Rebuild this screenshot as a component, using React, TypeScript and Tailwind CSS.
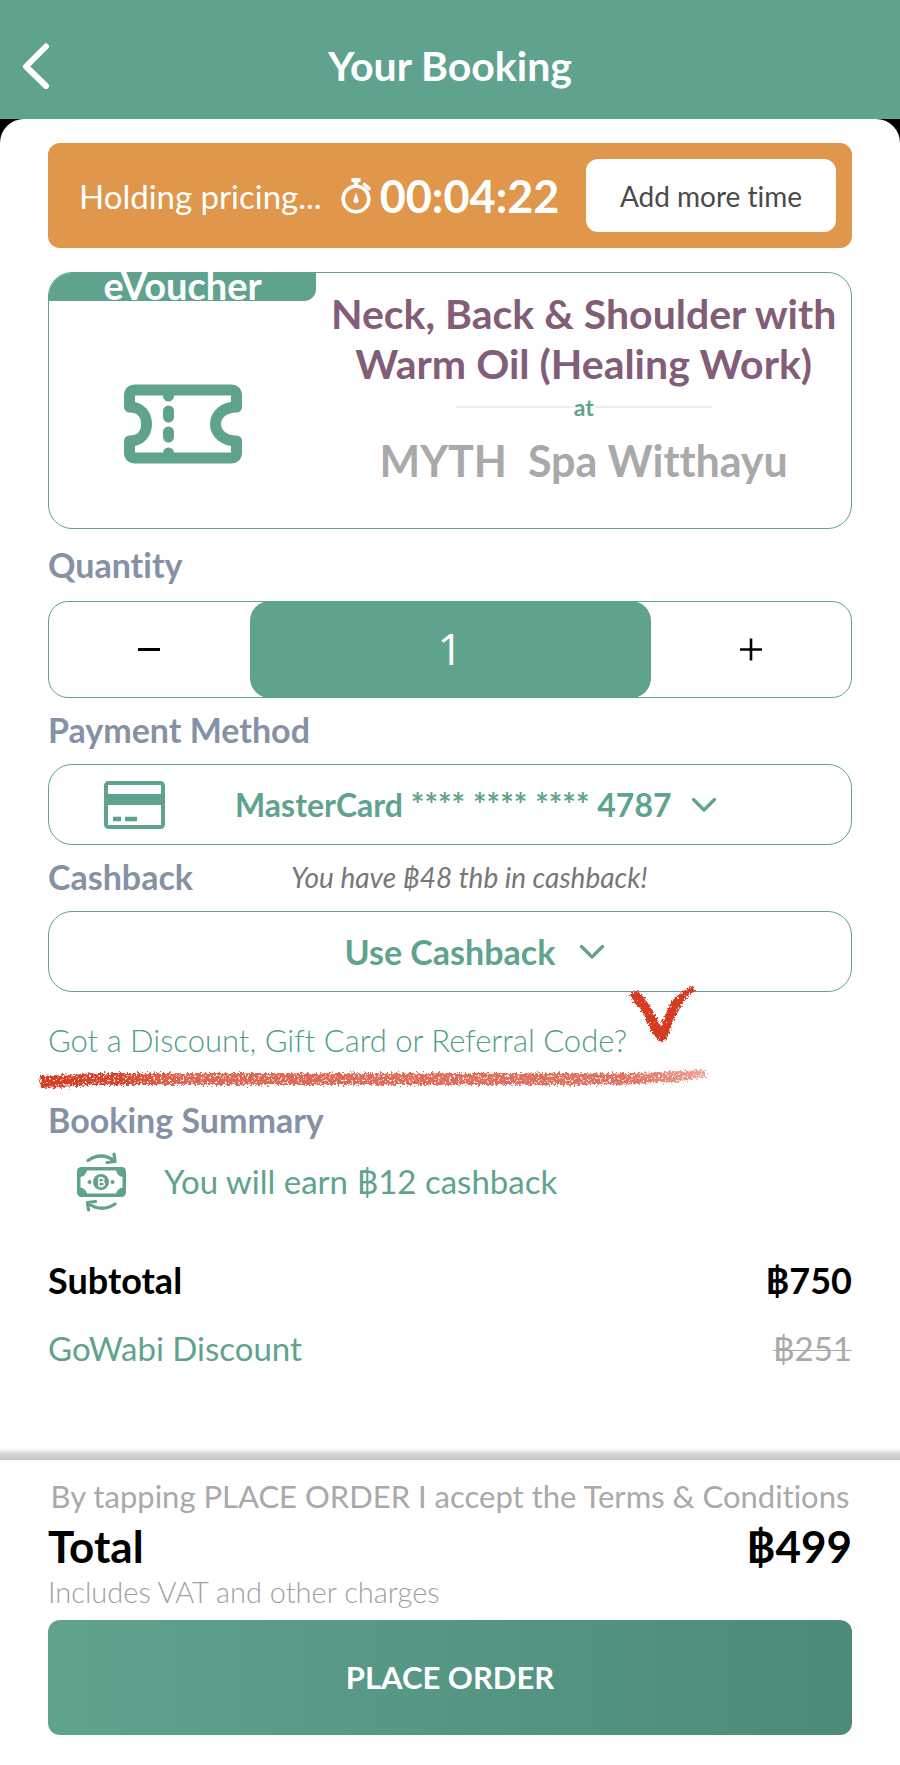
import { useState } from "react";
import type { ReactNode } from "react";

function SectionTitle({ children }: { children: ReactNode }) {
  return <h2 className="text-[34px] leading-10 font-bold text-[#8592a6]">{children}</h2>;
}

function ChevronDown() {
  return (
    <svg className="h-4 w-6 shrink-0" viewBox="0 0 24 16" fill="none" aria-hidden="true">
      <path d="M1.5 2.5 12 13 22.500 2.500" stroke="#5fa38f" strokeWidth="3.200" strokeLinecap="round" strokeLinejoin="round" />
    </svg>
  );
}

function BackIcon() {
  return (
    <svg className="h-[46px] w-7" viewBox="0 0 28 46" fill="none" aria-hidden="true">
      <path d="M24 3.500 4 23.500l20 19.500" stroke="#fff" strokeWidth="6" strokeLinecap="round" strokeLinejoin="round" />
    </svg>
  );
}

function StopwatchIcon() {
  return (
    <svg className="h-9 w-8 shrink-0" viewBox="0 0 32 36" fill="none" aria-hidden="true">
      <circle cx="16" cy="21" r="12.800" stroke="#fff" strokeWidth="3.600" />
      <path d="M11.500 0h9v4h-2.300v4h-4.400V4h-2.300z" fill="#fff" />
      <path d="m24.500 6.500 4.500 4" stroke="#fff" strokeWidth="3.600" strokeLinecap="round" />
      <path d="M16 14.500 18.500 22a2.600 2.600 0 1 1-5 0z" fill="#fff" />
    </svg>
  );
}

function TicketIcon() {
  return (
    <svg className="h-20 w-[118px]" viewBox="0 0 118 80" fill="none" aria-hidden="true">
      <path
        d="M11 6h96q5.500 0 5.500 5.500V23c-12 0-21 7-21 17s9 17 21 17v11.500q0 5.500-5.500 5.500H11q-5.500 0-5.500-5.500V57C17 57 22.500 49 22.500 40S17 23 5.500 23V11.500Q5.500 6 11 6z"
        stroke="#5fa38f"
        strokeWidth="11"
        strokeLinejoin="round"
      />
      <path d="M44.500 8v4M44.500 27v6M44.500 48v5M44.500 69v4" stroke="#5fa38f" strokeWidth="11" strokeLinecap="round" />
    </svg>
  );
}

function CardIcon() {
  return (
    <svg className="h-12 w-[61px]" viewBox="0 0 61 48" fill="none" aria-hidden="true">
      <rect x="2" y="2" width="57" height="44" rx="2.500" stroke="#5fa38f" strokeWidth="4" />
      <path d="M2 13h57v11H2z" fill="#5fa38f" />
      <path d="M9 38h8M21 38h12" stroke="#5fa38f" strokeWidth="4.500" />
    </svg>
  );
}

function CashbackIcon() {
  return (
    <svg className="h-[60px] w-[50px]" viewBox="0 0 50 60" fill="none" aria-hidden="true">
      <g stroke="#5fa38f" strokeWidth="3.200" strokeLinecap="round" strokeLinejoin="round">
        <path d="M12 8.500q13-9 26 0M38 2l1 7.500-8 1" />
        <path d="M39 52q-13 8.500-26 0M12.500 58 11.500 50.500l8-1" />
      </g>
      <rect x="1" y="15" width="49" height="30" rx="4.500" fill="#5fa38f" />
      <path d="M11 18.500h29q1.500 5.500 6.500 6.500v10.500q-5 1-6.500 6H11q-1.500-5-6.500-6V25q5-1 6.500-6.500z" fill="#fff" />
      <circle cx="25" cy="30" r="8" fill="#5fa38f" />
      <circle cx="13.500" cy="30" r="2" fill="#5fa38f" />
      <circle cx="36.500" cy="30" r="2" fill="#5fa38f" />
      <path
        d="M22.800 26.300h3q2.200.2 2.200 1.800t-2.200 1.900q2.700.2 2.700 2t-2.700 1.900h-3zM22.800 30h3M24 24.800v1.500M26 24.800v1.500M24 34v1.500M26 34v1.500"
        stroke="#fff"
        strokeWidth="1.400"
      />
    </svg>
  );
}

function CrayonFilter({ id, grain }: { id: string; grain: string }) {
  return (
    <filter id={id} x="-10%" y="-30%" width="120%" height="160%">
      <feTurbulence type="fractalNoise" baseFrequency="0.45" numOctaves={3} seed={7} result="noise" />
      <feDisplacementMap in="SourceGraphic" in2="noise" scale={7} xChannelSelector="R" yChannelSelector="G" result="rough" />
      <feColorMatrix in="noise" type="matrix" values={grain} result="grain" />
      <feComposite in="rough" in2="grain" operator="in" />
    </filter>
  );
}

function CrayonUnderline() {
  return (
    <svg className="pointer-events-none absolute top-[42px] -left-3 h-8 w-[674px]" viewBox="0 0 674 32" fill="none" aria-hidden="true">
      <defs>
        <CrayonFilter id="crayon-line" grain="0 0 0 0 0  0 0 0 0 0  0 0 0 0 0  0 0 6 0 -1.6" />
        <linearGradient id="crayon-fade" gradientUnits="userSpaceOnUse" x1="0" y1="0" x2="674" y2="0">
          <stop offset="0" stopColor="#d43a20" />
          <stop offset="0.120" stopColor="#d43a20" stopOpacity="0.950" />
          <stop offset="0.220" stopColor="#d43a20" stopOpacity="0.780" />
          <stop offset="0.880" stopColor="#d43a20" stopOpacity="0.720" />
          <stop offset="1" stopColor="#d43a20" stopOpacity="0.450" />
        </linearGradient>
      </defs>
      <path d="M4 14 60 11h540l70-3v7l-30 5-60 3H120L60 23 6 26q-4-6-2-12z" fill="url(#crayon-fade)" filter="url(#crayon-line)" />
    </svg>
  );
}

function CrayonTick() {
  return (
    <svg className="pointer-events-none absolute -top-9 left-[576px] h-16 w-[76px]" viewBox="0 0 76 64" fill="none" aria-hidden="true">
      <defs>
        <CrayonFilter id="crayon-tick" grain="0 0 0 0 0  0 0 0 0 0  0 0 0 0 0  0 0 12 0 -2.2" />
      </defs>
      <g filter="url(#crayon-tick)" fill="#d43a20">
        <path d="M6 10q5-6 11 0 9 10 20 33 5-18 13-28 8-8 19-13l3 4q-13 9-17 19-7 12-11 28-5 8-12 2Q25 42 16 24q-9-7-10-14z" />
      </g>
    </svg>
  );
}

export default function App() {
  const [quantity, setQuantity] = useState(1);

  return (
    <div className="min-h-screen bg-white font-['Lato','Noto_Sans',sans-serif] text-black [font-variant-ligatures:none]">
      <header className="grid h-[119px] grid-cols-[1fr_auto_1fr] items-center bg-[#5fa38f] px-[22px] pt-3">
        <button type="button" aria-label="Back" className="justify-self-start">
          <BackIcon />
        </button>
        <h1 className="text-[41px] leading-12 font-bold text-white">Your Booking</h1>
      </header>

      <div className="bg-black">
        <main className="rounded-t-3xl bg-white px-12 pt-6">
          <section className="flex h-[105px] items-center rounded-xl bg-[#e0974b] pr-4 pl-[31px] text-white">
            <p className="text-[33px] leading-10">Holding pricing...</p>
            <div className="ml-[18px] flex items-center gap-2">
              <StopwatchIcon />
              <span className="text-[45px] leading-12 font-bold">00:04:22</span>
            </div>
            <button type="button" className="ml-auto h-[73px] w-[250px] rounded-xl bg-white text-[28px] text-[#4a4a4a]">
              Add more time
            </button>
          </section>

          <section className="mt-6 flex h-[257px] rounded-3xl border border-[#5fa38f]">
            <div className="flex w-1/3 flex-col">
              <div className="flex h-7 items-start justify-center rounded-tl-[23px] rounded-br-xl bg-[#5fa38f] text-[38px] leading-6 font-bold text-white">
                eVoucher
              </div>
              <div className="flex flex-1 items-center justify-center pt-[18px]">
                <TicketIcon />
              </div>
            </div>
            <div className="flex flex-1 flex-col items-center pt-4 text-center">
              <h2 className="text-[41px] leading-[50px] font-bold whitespace-nowrap text-[#825d78]">
                Neck, Back &amp; Shoulder with
                <br />
                Warm Oil (Healing Work)
              </h2>
              <div className="mt-0.5 flex w-64 items-center text-[23px] leading-8 font-bold text-[#5fa38f]">
                <span className="h-0.5 flex-1 bg-[#eeeeee]" />
                at
                <span className="h-0.5 flex-1 bg-[#eeeeee]" />
              </div>
              <p className="mt-3 text-[43px] leading-[52px] font-bold whitespace-pre text-[#a9a9a9]">MYTH  Spa Witthayu</p>
            </div>
          </section>

          <section className="pt-4">
            <SectionTitle>Quantity</SectionTitle>
            <div className="mt-4 grid h-[97px] grid-cols-[1fr_2fr_1fr] rounded-[20px] border border-[#5fa38f]">
              <button type="button" aria-label="Decrease quantity" className="flex items-center justify-center" onClick={() => setQuantity(Math.max(1, quantity - 1))}>
                <svg className="size-6" viewBox="0 0 24 24" aria-hidden="true">
                  <path d="M1 11.500h22" stroke="#000" strokeWidth="3" />
                </svg>
              </button>
              <output className="-my-px flex items-center justify-center rounded-[20px] bg-[#5fa38f] pb-1 font-['Open_Sans','Noto_Sans',sans-serif] text-[44px] leading-[60px] text-white">{quantity}</output>
              <button type="button" aria-label="Increase quantity" className="flex items-center justify-center" onClick={() => setQuantity(quantity + 1)}>
                <svg className="size-6" viewBox="0 0 24 24" aria-hidden="true">
                  <path d="M1 11.500h22M12 .5v22" stroke="#000" strokeWidth="2.600" />
                </svg>
              </button>
            </div>
          </section>

          <section className="pt-3">
            <label htmlFor="payment">
              <SectionTitle>Payment Method</SectionTitle>
            </label>
            <div className="mt-[14px] flex h-[81px] items-center rounded-3xl border border-[#5fa38f] pl-[55px]">
              <CardIcon />
              <select id="payment" className="ml-[70px] appearance-none bg-transparent text-[32px] leading-10 font-bold text-[#5fa38f]">
                <option>MasterCard **** **** **** 4787</option>
              </select>
              <span className="ml-5">
                <ChevronDown />
              </span>
            </div>
          </section>

          <section className="pt-3">
            <div className="flex items-center">
              <label htmlFor="cashback">
                <SectionTitle>Cashback</SectionTitle>
              </label>
              <p className="ml-[98px] text-[28px] leading-10 text-[#777777] italic">You have ฿48 thb in cashback!</p>
            </div>
            <div className="mt-[14px] flex h-[81px] items-center justify-center gap-6 rounded-3xl border border-[#5fa38f] pl-12">
              <select id="cashback" className="appearance-none bg-transparent text-[34px] leading-10 font-bold text-[#5fa38f]">
                <option>Use Cashback</option>
              </select>
              <ChevronDown />
            </div>
          </section>

          <div className="relative mt-7">
            <a href="#code" className="block text-[31px] leading-10 font-light text-[#4f9d87]">
              Got a Discount, Gift Card or Referral Code?
            </a>
            <CrayonTick />
            <CrayonUnderline />
          </div>

          <section className="pt-10">
            <SectionTitle>Booking Summary</SectionTitle>
            <div className="mt-3 flex h-[60px] items-center gap-[38px] pl-7 text-[33px] text-[#5fa38f]">
              <CashbackIcon />
              <p>You will earn ฿12 cashback</p>
            </div>
            <dl className="mt-12">
              <div className="flex items-center justify-between text-[36px] leading-10 font-bold">
                <dt>Subtotal</dt>
                <dd>฿750</dd>
              </div>
              <div className="mt-7 flex items-center justify-between text-[33px] leading-10">
                <dt className="text-[#5fa38f]">GoWabi Discount</dt>
                <dd className="text-[#a9a9a9] line-through decoration-1">฿251</dd>
              </div>
            </dl>
          </section>
        </main>
      </div>

      <div className="mt-20 h-3 bg-linear-to-b from-white via-[#d4d4d4] to-[#c6c6c6]" />
      <footer className="px-12 pt-4 pb-7">
        <p className="text-center text-[31px] leading-10 text-[#a9a9a9]">By tapping PLACE ORDER I accept the Terms &amp; Conditions</p>
        <div className="mt-1 flex items-center justify-between text-[44px] leading-[52px] font-bold">
          <span>Total</span>
          <span>฿499</span>
        </div>
        <p className="text-[29px] leading-10 font-light text-[#a0a0a0]">Includes VAT and other charges</p>
        <button type="button" className="mt-2 h-[115px] w-full rounded-xl bg-linear-to-r from-[#5fa38f] to-[#4c8a79] text-[31px] font-bold text-white">
          PLACE ORDER
        </button>
      </footer>
    </div>
  );
}
